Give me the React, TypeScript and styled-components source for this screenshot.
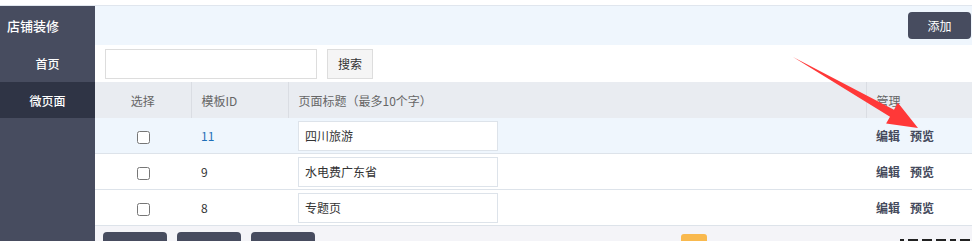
import React from "react";
import styled, { createGlobalStyle } from "styled-components";

const GlobalStyle = createGlobalStyle`
  html, body {
    margin: 0;
    padding: 0;
    background: #ffffff;
    overflow: hidden;
  }
  body {
    font-family: "Microsoft YaHei", "Noto Sans CJK SC", "Noto Sans", sans-serif;
    font-size: 12px;
    color: #333;
  }
`;

interface PageRow {
  id: number;
  title: string;
}

const rows: PageRow[] = [
  { id: 11, title: "四川旅游" },
  { id: 9, title: "水电费广东省" },
  { id: 8, title: "专题页" },
];

const Screen = styled.div`
  position: relative;
  width: 972px;
  height: 241px;
  padding-top: 5px;
  box-sizing: border-box;
`;

const Layout = styled.div`
  display: flex;
  border-top: 1px solid #e0e6ee;
  height: 235px;
`;

const Sidebar = styled.div`
  width: 95px;
  flex-shrink: 0;
  background: #474c5f;
  display: flex;
  flex-direction: column;
`;

const SideTitle = styled.div`
  height: 39px;
  display: flex;
  align-items: center;
  padding-left: 7px;
  color: #fff;
  font-size: 13px;
  font-weight: 500;
`;

const SideItem = styled.div<{ $active?: boolean; $h: number }>`
  height: ${(p) => p.$h}px;
  display: flex;
  align-items: center;
  justify-content: center;
  color: #fff;
  font-size: 12px;
  font-weight: 500;
  background: ${(p) => (p.$active ? "#2f3445" : "transparent")};
`;

const Main = styled.div`
  flex: 1;
  display: flex;
  flex-direction: column;
  min-width: 0;
`;

const TopBar = styled.div`
  height: 39px;
  background: #eff6fd;
  display: flex;
  align-items: center;
  justify-content: flex-end;
  padding-right: 1px;
`;

const DarkButton = styled.button<{ $w?: number }>`
  width: ${(p) => p.$w ?? 63}px;
  height: 27px;
  border: none;
  border-radius: 4px;
  background: #474c5f;
  color: #fff;
  font-family: inherit;
  font-size: 12px;
  padding: 0;
  flex-shrink: 0;
`;

const SearchRow = styled.div`
  height: 37px;
  display: flex;
  align-items: center;
  gap: 10px;
  padding-left: 10px;
`;

const SearchInput = styled.input`
  width: 212px;
  height: 30px;
  box-sizing: border-box;
  border: 1px solid #dddddd;
  outline: none;
`;

const SearchButton = styled.button`
  width: 46px;
  height: 30px;
  box-sizing: border-box;
  border: 1px solid #dddddd;
  background: #f5f5f5;
  color: #333;
  font-family: inherit;
  font-size: 12px;
  padding: 0;
`;

const Table = styled.table`
  width: 100%;
  border-collapse: collapse;
  table-layout: fixed;
`;

const HeadCell = styled.th<{ $w: number; $center?: boolean; $last?: boolean }>`
  width: ${(p) => p.$w}px;
  height: 36px;
  padding: 0 0 0 ${(p) => (p.$center ? 0 : 10)}px;
  background: #e9ecf1;
  color: #666;
  font-weight: normal;
  font-size: 12px;
  text-align: ${(p) => (p.$center ? "center" : "left")};
  border-right: ${(p) => (p.$last ? "none" : "1px solid #dadde3")};
  box-sizing: border-box;
`;

const Row = styled.tr<{ $hover?: boolean }>`
  background: ${(p) => (p.$hover ? "#eff6fd" : "#fff")};
  border-bottom: 1px solid #dde3ea;
`;

const Cell = styled.td<{ $center?: boolean; $blue?: boolean }>`
  height: 35px;
  padding: 0 0 0 ${(p) => (p.$center ? 0 : 10)}px;
  text-align: ${(p) => (p.$center ? "center" : "left")};
  color: ${(p) => (p.$blue ? "#1f6fb8" : "#333")};
  font-size: 12px;
`;

const Check = styled.input`
  margin: 0;
  width: 13px;
  height: 13px;
  vertical-align: middle;
`;

const TitleInput = styled.input`
  width: 200px;
  height: 30px;
  box-sizing: border-box;
  border: 1px solid #dde3ea;
  padding: 0 6px;
  font-family: inherit;
  font-size: 12px;
  color: #333;
  outline: none;
  display: block;
`;

const Actions = styled.div`
  display: flex;
  gap: 10px;
  font-weight: bold;
  color: #454a5c;
`;

const Footer = styled.div`
  flex: 1;
  background: #f4f4f8;
  display: flex;
  align-items: flex-start;
  padding: 6px 0 0 8px;
  gap: 10px;
  overflow: hidden;
`;

const Badge = styled.div`
  width: 26px;
  height: 20px;
  margin: 2px 0 0 356px;
  border-radius: 3px;
  background: #f9b94e;
  flex-shrink: 0;
`;

const PagerMarks = styled.div`
  margin: 7px 0 0 auto;
  padding-right: 2px;
  display: flex;
  gap: 4px;
`;

const Mark = styled.span`
  width: 10px;
  height: 12px;
  background: #222;
`;

const Overlay = styled.svg`
  position: absolute;
  left: 0;
  top: 0;
  pointer-events: none;
`;

const App: React.FC = () => {
  return (
    <Screen>
      <GlobalStyle />
      <Layout>
        <Sidebar>
          <SideTitle>店铺装修</SideTitle>
          <SideItem $h={37}>首页</SideItem>
          <SideItem $h={36} $active>
            微页面
          </SideItem>
        </Sidebar>
        <Main>
          <TopBar>
            <DarkButton>添加</DarkButton>
          </TopBar>
          <SearchRow>
            <SearchInput />
            <SearchButton>搜索</SearchButton>
          </SearchRow>
          <Table>
            <thead>
              <tr>
                <HeadCell $w={96} $center>
                  选择
                </HeadCell>
                <HeadCell $w={97}>模板ID</HeadCell>
                <HeadCell $w={578}>页面标题（最多10个字）</HeadCell>
                <HeadCell $w={106} $last>
                  管理
                </HeadCell>
              </tr>
            </thead>
            <tbody>
              {rows.map((r, i) => (
                <Row key={r.id} $hover={i === 0}>
                  <Cell $center>
                    <Check type="checkbox" />
                  </Cell>
                  <Cell $blue={i === 0}>{r.id}</Cell>
                  <Cell>
                    <TitleInput defaultValue={r.title} />
                  </Cell>
                  <Cell>
                    <Actions>
                      <span>编辑</span>
                      <span>预览</span>
                    </Actions>
                  </Cell>
                </Row>
              ))}
            </tbody>
          </Table>
          <Footer>
            <DarkButton $w={64} aria-label="删除" />
            <DarkButton $w={64} aria-label="复制" />
            <DarkButton $w={64} aria-label="发布" />
            <Badge />
            <PagerMarks>
              <Mark style={{ width: 4 }} />
              <Mark />
              <Mark />
              <Mark />
              <Mark style={{ width: 6 }} />
              <Mark />
            </PagerMarks>
          </Footer>
        </Main>
      </Layout>
      <Overlay width="972" height="241" viewBox="0 0 972 241">
        <polygon
          points="793,57 894,109.7 897.9,102.8 918,128 886.1,123.6 890,116.7"
          fill="#ff3838"
        />
      </Overlay>
    </Screen>
  );
};

export default App;
